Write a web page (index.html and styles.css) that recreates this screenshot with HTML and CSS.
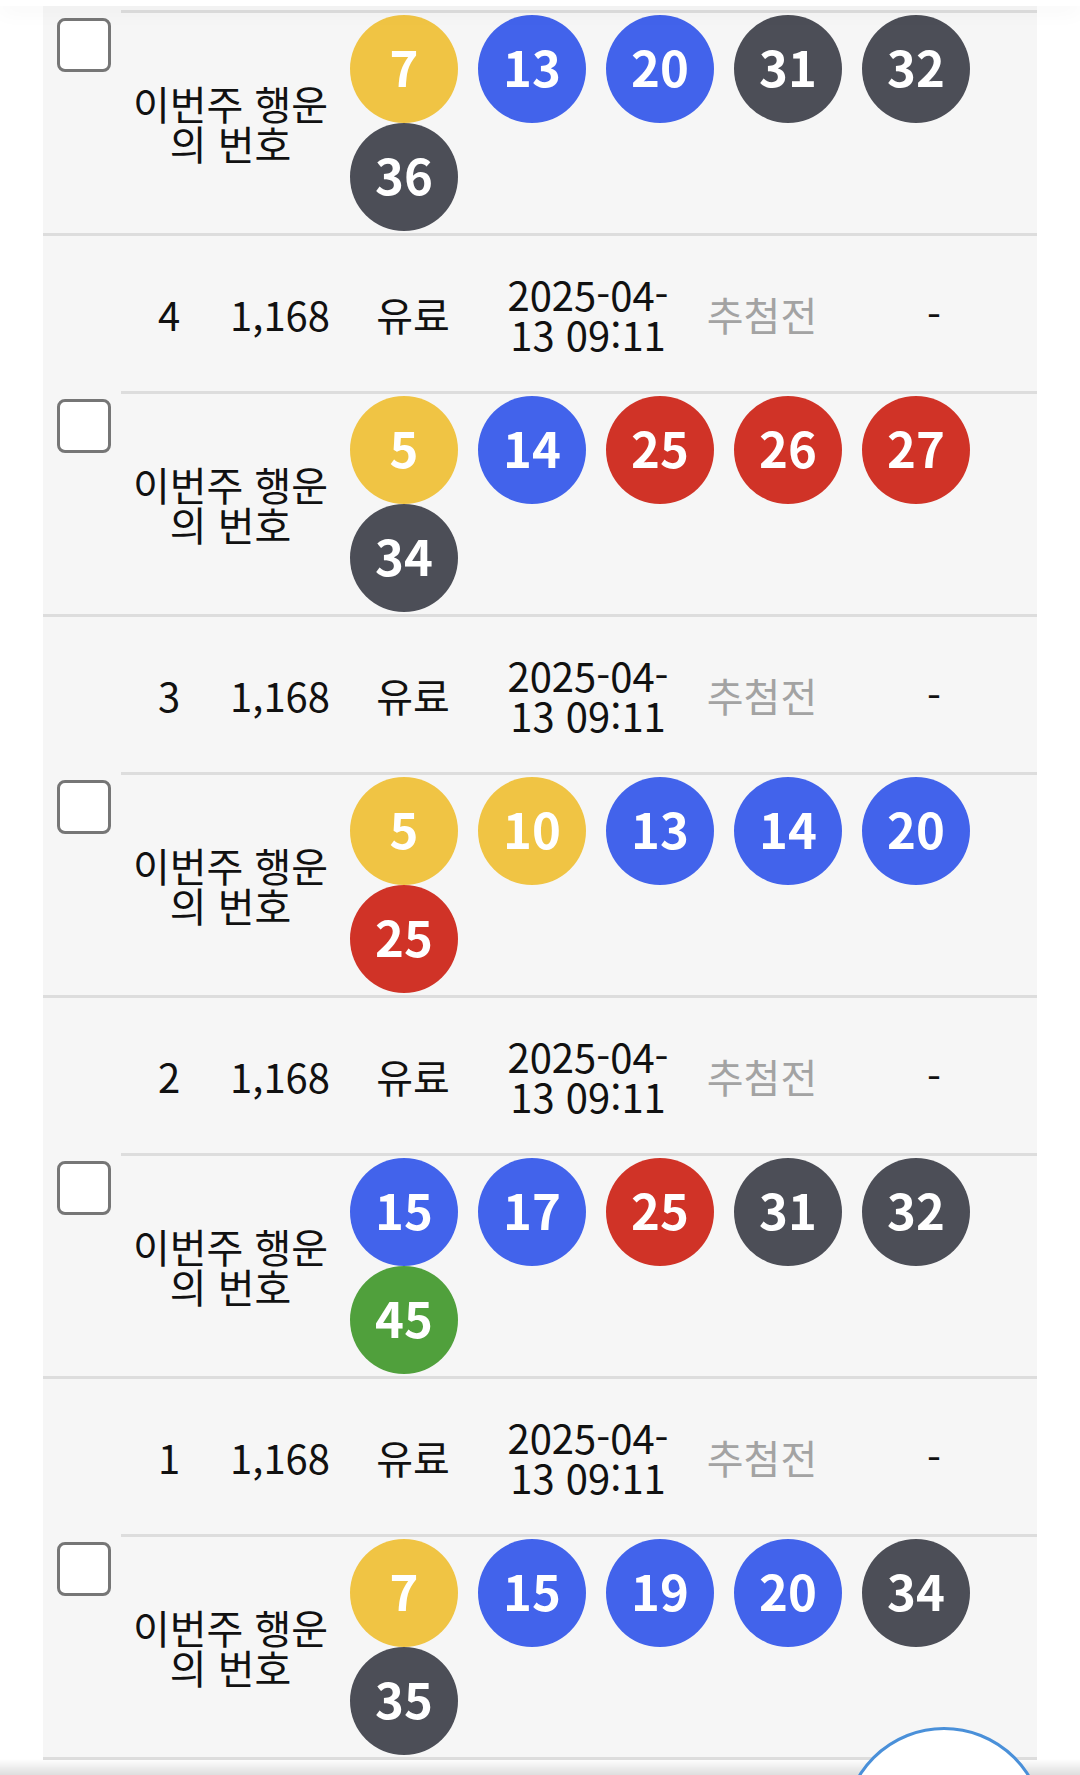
FILE: index.html
```html
<!DOCTYPE html>
<html lang="ko">
  <head>
    <meta charset="UTF-8" />
    <meta name="viewport" content="width=device-width, initial-scale=1.0" />
    <title>구매 내역</title>
    <link rel="stylesheet" href="styles.css">
  </head>
  <body>
    <div class="top-bar"></div>

    <div class="history">
      <!-- 5 (위쪽은 스크롤로 가려짐) -->
      <div class="record continued">
        <div class="pick">
          <div class="pick-check"><span class="checkbox"></span></div>
          <div class="pick-body">
            <div class="pick-label">이번주 행운<br>의 번호</div>
            <div class="balls">
              <span class="ball yellow">7</span>
              <span class="ball blue">13</span>
              <span class="ball blue">20</span>
              <span class="ball dark">31</span>
              <span class="ball dark">32</span>
              <span class="ball dark">36</span>
            </div>
          </div>
        </div>
      </div>

      <!-- 4 -->
      <div class="record">
        <div class="info">
          <span></span>
          <span>4</span>
          <span>1,168</span>
          <span>유료</span>
          <span>2025-04-<br>13 09:11</span>
          <span class="muted">추첨전</span>
          <span>-</span>
        </div>
        <div class="pick">
          <div class="pick-check"><span class="checkbox"></span></div>
          <div class="pick-body">
            <div class="pick-label">이번주 행운<br>의 번호</div>
            <div class="balls">
              <span class="ball yellow">5</span>
              <span class="ball blue">14</span>
              <span class="ball red">25</span>
              <span class="ball red">26</span>
              <span class="ball red">27</span>
              <span class="ball dark">34</span>
            </div>
          </div>
        </div>
      </div>

      <!-- 3 -->
      <div class="record">
        <div class="info">
          <span></span>
          <span>3</span>
          <span>1,168</span>
          <span>유료</span>
          <span>2025-04-<br>13 09:11</span>
          <span class="muted">추첨전</span>
          <span>-</span>
        </div>
        <div class="pick">
          <div class="pick-check"><span class="checkbox"></span></div>
          <div class="pick-body">
            <div class="pick-label">이번주 행운<br>의 번호</div>
            <div class="balls">
              <span class="ball yellow">5</span>
              <span class="ball yellow">10</span>
              <span class="ball blue">13</span>
              <span class="ball blue">14</span>
              <span class="ball blue">20</span>
              <span class="ball red">25</span>
            </div>
          </div>
        </div>
      </div>

      <!-- 2 -->
      <div class="record">
        <div class="info">
          <span></span>
          <span>2</span>
          <span>1,168</span>
          <span>유료</span>
          <span>2025-04-<br>13 09:11</span>
          <span class="muted">추첨전</span>
          <span>-</span>
        </div>
        <div class="pick">
          <div class="pick-check"><span class="checkbox"></span></div>
          <div class="pick-body">
            <div class="pick-label">이번주 행운<br>의 번호</div>
            <div class="balls">
              <span class="ball blue">15</span>
              <span class="ball blue">17</span>
              <span class="ball red">25</span>
              <span class="ball dark">31</span>
              <span class="ball dark">32</span>
              <span class="ball green">45</span>
            </div>
          </div>
        </div>
      </div>

      <!-- 1 -->
      <div class="record">
        <div class="info">
          <span></span>
          <span>1</span>
          <span>1,168</span>
          <span>유료</span>
          <span>2025-04-<br>13 09:11</span>
          <span class="muted">추첨전</span>
          <span>-</span>
        </div>
        <div class="pick">
          <div class="pick-check"><span class="checkbox"></span></div>
          <div class="pick-body">
            <div class="pick-label">이번주 행운<br>의 번호</div>
            <div class="balls">
              <span class="ball yellow">7</span>
              <span class="ball blue">15</span>
              <span class="ball blue">19</span>
              <span class="ball blue">20</span>
              <span class="ball dark">34</span>
              <span class="ball dark">35</span>
            </div>
          </div>
        </div>
      </div>
    </div>

    <div class="bottom-shade"></div>
    <button type="button" class="fab"></button>
  </body>
</html>
```

FILE: styles.css
```css
body {
  margin: 0;
  background: #ffffff;
  font-family: "Noto Sans CJK KR", "Noto Sans", sans-serif;
  color: #111;
}
.top-bar {
  position: fixed;
  top: 0;
  left: 0;
  right: 0;
  height: 6px;
  background: #ffffff;
  box-shadow: 0 2px 22px rgba(0, 0, 0, 0.09);
  z-index: 5;
}
.history {
  margin: 0 43px;
  background: #f6f6f6;
  border-bottom: 3px solid #dddddd;
}
.record {
  border-top: 3px solid #dddddd;
}
.record.continued {
  border-top: none;
  padding-top: 10px;
}
.info {
  display: grid;
  grid-template-columns: 78px 96px 126px 140px 210px 138px 1fr;
  align-items: center;
  height: 155px;
  font-size: 40px;
  line-height: 40px;
  text-align: center;
}
.muted {
  color: #a3a3a3;
}
.pick {
  display: flex;
}
.pick-check {
  width: 78px;
  padding: 8px 0 0 14px;
  box-sizing: border-box;
}
.checkbox {
  display: block;
  width: 54px;
  height: 54px;
  box-sizing: border-box;
  border: 3px solid #767676;
  border-radius: 8px;
  background: #ffffff;
}
.pick-body {
  flex: 1;
  display: flex;
  align-items: center;
  border-top: 3px solid #dddddd;
  padding: 2px 0;
}
.pick-label {
  width: 219px;
  font-size: 40px;
  line-height: 40px;
  text-align: center;
}
.balls {
  flex: 1;
  display: flex;
  flex-wrap: wrap;
  column-gap: 20px;
  margin-left: 10px;
}
.ball {
  display: flex;
  align-items: center;
  justify-content: center;
  width: 108px;
  height: 108px;
  box-sizing: border-box;
  padding-bottom: 7px;
  border-radius: 50%;
  color: #ffffff;
  font-size: 49px;
  font-weight: bold;
  line-height: 1;
}
.yellow {
  background: #f0c444;
}
.blue {
  background: #4263eb;
}
.red {
  background: #d03327;
}
.dark {
  background: #4c4e57;
}
.green {
  background: #50a03c;
}
.bottom-shade {
  position: fixed;
  left: 0;
  right: 0;
  bottom: 0;
  height: 16px;
  background: linear-gradient(rgba(0, 0, 0, 0), rgba(0, 0, 0, 0.13));
  z-index: 5;
}
.fab {
  position: fixed;
  right: 35px;
  bottom: -154px;
  width: 202px;
  height: 202px;
  border: 3px solid #4a90d9;
  border-radius: 50%;
  background: #ffffff;
  z-index: 6;
}
```
